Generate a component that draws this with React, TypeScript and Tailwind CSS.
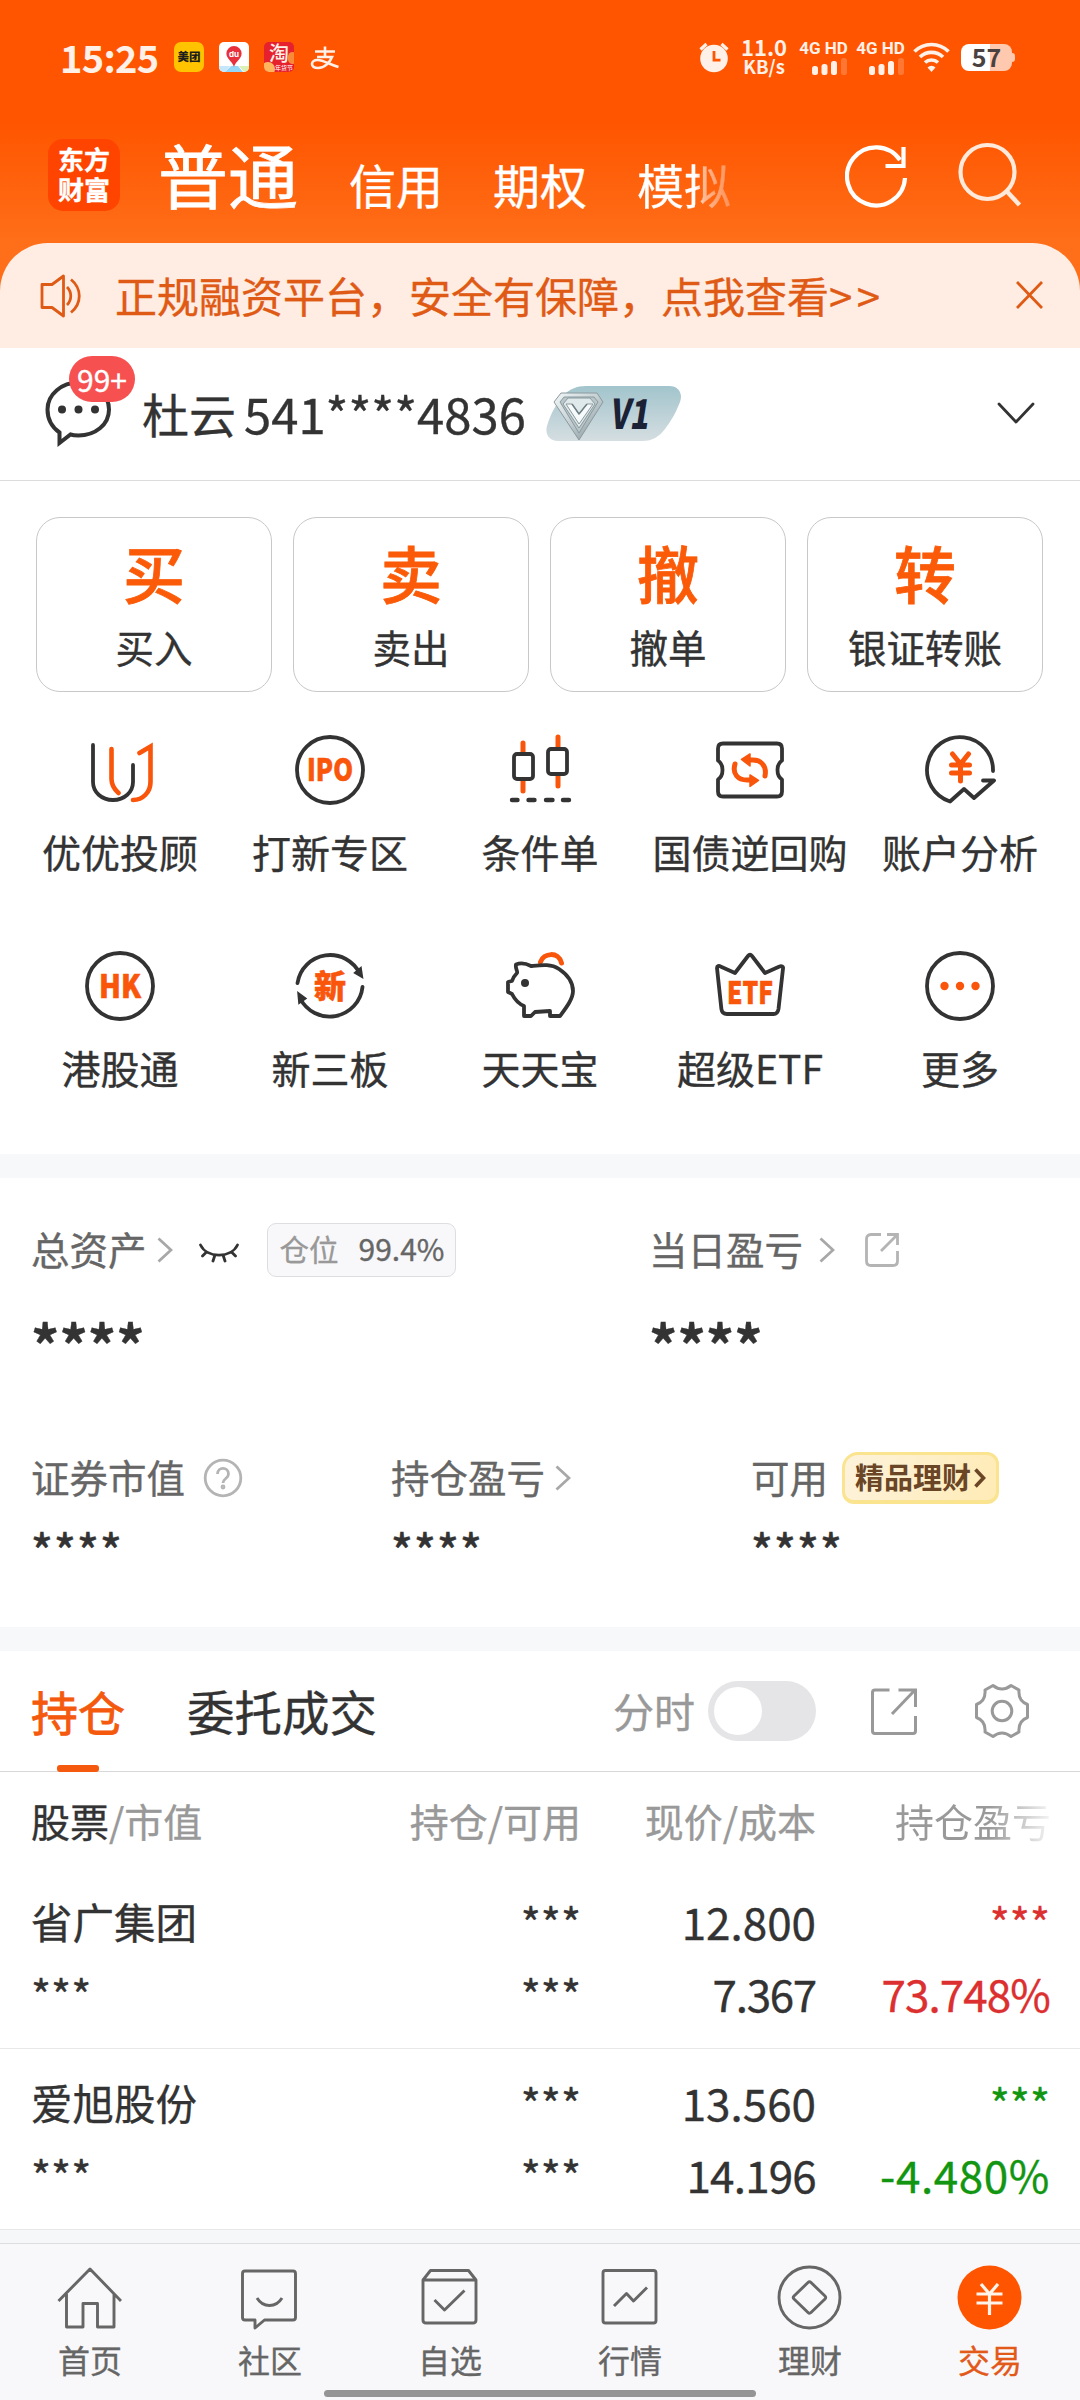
import React from "react";

const INK = "#333333";
const ORANGE = "#f9560b";

/* ---------- status bar ---------- */

function Signal() {
  return (
    <div className="flex w-[57px] shrink-0 flex-col items-center">
      <span className="h-[17px] whitespace-nowrap font-['Roboto','Noto_Sans_CJK_SC',sans-serif] text-[17px] font-bold leading-[17px]">4G HD</span>
      <svg className="ml-[13px] mt-px" width="36" height="17" viewBox="0 0 36 17" fill="#fff0e8">
        <rect x="0" y="8" width="6" height="9" rx="2.5" />
        <rect x="9.5" y="6" width="6" height="11" rx="2.5" />
        <rect x="19" y="3" width="6" height="14" rx="2.5" />
        <rect x="29" y="0" width="6" height="17" rx="2.5" opacity=".22" />
      </svg>
    </div>
  );
}

function StatusBar() {
  return (
    <div className="flex h-[114px] items-center pl-[60px] text-[#fff0e8] [-webkit-text-stroke:0px]">
      <span className="w-[114px] shrink-0 font-['Noto_Sans_CJK_SC',sans-serif] text-[38px] font-bold leading-[56px] tracking-[-0.7px]">15:25</span>
      <div className="flex h-[30px] w-[30px] shrink-0 items-center justify-center rounded-[7px] bg-[#ffc300] text-[11.5px] font-black leading-none text-[#1c1c1c]">美团</div>
      <svg className="ml-[15px] shrink-0 rounded-[5px]" width="30" height="30" viewBox="0 0 30 30">
        <rect width="30" height="30" fill="#fff" />
        <path d="M0 24h11l-5 6H0z" fill="#c6e6fb" />
        <path d="M12 24h7l5 6H6z" fill="#93d6f8" />
        <path d="M20 24h10v6h-5z" fill="#dcefb4" />
        <path d="M15 4a7.6 7.6 0 0 0-7.6 7.6C7.400 17 13 19 15 25c2-6 7.600-8 7.600-13.400A7.600 7.600 0 0 0 15 4z" fill="#e8303c" />
        <text x="15" y="14.500" fontSize="8" fontWeight="700" fill="#fff" textAnchor="middle" fontFamily="Inter">du</text>
      </svg>
      <div className="relative ml-[15px] h-[30px] w-[30px] shrink-0 overflow-hidden rounded-[5px] bg-[#e6202c]">
        <div className="absolute bottom-[-4px] left-[-3px] h-[14px] w-[14px] rounded-full bg-[#ffb45e]" />
        <div className="absolute right-[-3px] top-[10px] h-[12px] w-[9px] rounded-full bg-[#f98a3a]" />
        <span className="absolute left-[5px] top-0 text-[20px] font-medium leading-[22px] text-[#fff0e8]">淘</span>
        <span className="absolute bottom-0 left-[11px] whitespace-nowrap text-[6px] leading-[8px] text-white">年货节</span>
      </div>
      <svg className="ml-[16px] mt-[2px] shrink-0" width="30" height="24" viewBox="0 0 30 24" fill="none" stroke="#fff0e8" strokeWidth="2.600">
        <path d="M5 5.500h20M15 .5v10M7 11h15c-2 5-7 11-14 11-4 0-6-1.800-6-4s2-4 5.500-4c6 0 12 4.500 21 7" />
      </svg>

      <svg className="ml-[359px] shrink-0" width="30" height="32" viewBox="0 0 30 32">
        <circle cx="15" cy="17.500" r="13.800" fill="#fff0e8" />
        <path d="M1.500 8.500L7.500 3M28.500 8.500L22.500 3" stroke="#fff0e8" strokeWidth="3.200" />
        <path d="M15 10v9.200h6.500" stroke="#ff5500" strokeWidth="2.800" fill="none" />
      </svg>
      <div className="ml-[9px] mt-[-3px] flex w-[52px] shrink-0 flex-col items-center font-['Noto_Sans_CJK_SC',sans-serif] font-bold">
        <span className="text-[22px] leading-[20px]">11.0</span>
        <span className="text-[18.500px] leading-[20px]">KB/s</span>
      </div>
      <div className="ml-[5px]" />
      <Signal />
      <Signal />
      <svg className="ml-[4px] shrink-0" width="37" height="30" viewBox="0 0 37 30" fill="none" stroke="#fff0e8" strokeWidth="3.600">
        <path d="M1.500 9.500a24 24 0 0 1 34 0M7 15a16.500 16.500 0 0 1 23 0M12 20.500a9.500 9.500 0 0 1 13 0" />
        <path d="M14.500 25.500a5.600 5.600 0 0 1 8 0l-4 4.500z" fill="#fff0e8" stroke="none" />
      </svg>
      <div className="ml-[11px] flex h-[27px] w-[51px] shrink-0 items-center justify-center rounded-[8px] bg-[linear-gradient(90deg,#ffffff_56%,#ffc9b0_56%)] text-[25px] font-bold leading-none text-[#4a4240]">
        <span className="mt-[-2px]">57</span>
      </div>
      <div className="h-[9px] w-[3px] shrink-0 rounded-r-[3px] bg-[#ffc9b0]" />
    </div>
  );
}

function Header() {
  return (
    <div className="flex h-[129px] items-start pl-[48px] text-white">
      <div className="mt-[25px] flex h-[72px] w-[72px] shrink-0 flex-col items-center justify-center rounded-[15px] bg-[#ff4400] text-[26px] font-bold leading-[30px]">
        <span className="mt-[-2px]">东方</span>
        <span>财富</span>
      </div>
      <span className="ml-[38px] mt-[10px] shrink-0 text-[70px] leading-[100px] [-webkit-text-stroke:0.8px]">普通</span>
      <div className="ml-[51px] flex w-[400px] shrink-0 gap-[50px] whitespace-nowrap pt-[37px] text-[47px] leading-[66px]">
        <span>信用</span>
        <span>期权</span>
        <span className="bg-[linear-gradient(90deg,#ffffff_62%,#ffb790_72%,#ff9055_100%)] bg-clip-text text-transparent">模拟</span>
      </div>
      <svg className="ml-[96px] mt-[30px] shrink-0" width="64" height="64" viewBox="0 0 64 64" fill="none" stroke="#fff" strokeWidth="4.200">
        <path d="M60 34A29 29 0 1 1 55 16" />
        <path d="M58.500 3v19H40.500" />
      </svg>
      <svg className="ml-[49px] mt-[28px] shrink-0" width="64" height="66" viewBox="0 0 64 66" fill="none" stroke="#ffe9da" strokeWidth="4.200">
        <circle cx="29.500" cy="30" r="27" />
        <path d="M48.500 49L61.500 63" strokeWidth="4.500" />
      </svg>
    </div>
  );
}

function Notice() {
  return (
    <div className="flex h-[105px] items-center rounded-t-[48px] bg-[#ffede4] pl-[40px] text-[#df5a14]">
      <svg width="42" height="46" viewBox="0 0 42 46" fill="none" stroke="#df5a14" strokeWidth="2.800" strokeLinejoin="round">
        <path d="M2 11.500h10L23.500 3v40L12 34.500H2z" />
        <path d="M27 14c5 5 5 13 0 18M31 6.500c11 9 11 24 0 33" />
      </svg>
      <span className="ml-[33px] mt-[-2px] w-[901px] whitespace-nowrap text-[42px] leading-[60px]">正规融资平台，安全有保障，点我查看<span className="tracking-[4.500px]">&gt;&gt;</span></span>
      <svg className="mt-[-1px]" width="27" height="28" viewBox="0 0 27 28" fill="none" stroke="#df5a14" strokeWidth="2.800">
        <path d="M1 1l25 26M26 1L1 27" />
      </svg>
    </div>
  );
}

function Account() {
  return (
    <div className="flex h-[133px] items-center border-b border-[#dcdcdc] bg-white pl-[44px] text-[#333333]">
      <div className="relative h-[68px] w-[70px] shrink-0">
        <svg width="70" height="68" viewBox="0 0 70 68" fill="none" stroke={INK} strokeWidth="4">
          <path d="M15.500 52.500V63l11-8.500c3 1 5.500 1 8 1C51 55.500 65 45 65 29.500S51 2.500 34.500 2.500 3.500 14 3.500 29.500c0 10 5 18 12 23z" />
          <g fill={INK} stroke="none">
            <circle cx="18" cy="29.500" r="4" />
            <circle cx="34.500" cy="29.500" r="4" />
            <circle cx="51" cy="29.500" r="4" />
          </g>
        </svg>
        <div className="absolute left-[25px] top-[-24px] flex h-[46px] w-[66px] items-center justify-center rounded-full bg-[#f65050] text-[30px] leading-none text-white"><span className="mt-[-1px]">99+</span></div>
      </div>
      <span className="ml-[28px] mt-[-3px] w-[102px] shrink-0 whitespace-nowrap text-[47px] leading-[66px]">杜云</span>
      <span className="mt-[-3px] w-[301px] shrink-0 whitespace-nowrap text-[49px] leading-[66px]">541****4836</span>
      <svg className="shrink-0" width="137" height="56" viewBox="0 0 137 56">
        <defs>
          <linearGradient id="pill" x1="0" y1="0" x2="0" y2="1">
            <stop offset="0" stopColor="#a2c4cc" />
            <stop offset="1" stopColor="#d5dee1" />
          </linearGradient>
          <linearGradient id="gem" x1="0" y1="0" x2="1" y2="1">
            <stop offset="0" stopColor="#f2f7f8" />
            <stop offset=".5" stopColor="#c3ced1" />
            <stop offset="1" stopColor="#7e8d92" />
          </linearGradient>
        </defs>
        <path d="M41 0h83c10 0 14 8 11 16-5 13-10 20-15 27-6 8-13 12-22 12H13C3 55 0 47 2 40 6 26 12 17 18 10 24 3 32 0 41 0z" fill="url(#pill)" />
        <g stroke="#8b9a9f" strokeWidth="1" strokeLinejoin="round">
          <path d="M16 7h36l6 9-24 38L9 16z" fill="url(#gem)" />
          <path d="M19 11h30l4 5-19 31-19-31z" fill="#b9c6ca" />
          <path d="M23 12h22l5 6-16 24-16-24z" fill="#dfe8ea" />
          <path d="M21 18l13 20 14-20h-6l-8 10-7-10z" fill="#f6fafb" />
          <path d="M27 18l7 10 8-10" fill="none" stroke="#6f7f85" strokeWidth="1.500" />
        </g>
        <text x="64" y="42.500" fontFamily="Noto Sans CJK SC" fontWeight="900" fontSize="41" fill="#1b2236" textLength="39" lengthAdjust="spacingAndGlyphs" transform="translate(7 0) skewX(-9)">V1</text>
      </svg>
      <svg className="ml-[315px] mt-[-3px] shrink-0" width="38" height="22" viewBox="0 0 38 22" fill="none" stroke="#333" strokeWidth="2.800" strokeLinecap="round" strokeLinejoin="round">
        <path d="M2 2l17 18L36 2" />
      </svg>
    </div>
  );
}

/* ---------- quick actions ---------- */

const actions = [
  { glyph: "买", label: "买入" },
  { glyph: "卖", label: "卖出" },
  { glyph: "撤", label: "撤单" },
  { glyph: "转", label: "银证转账" },
];

function Actions() {
  return (
    <div className="grid grid-cols-4 gap-[21px] pl-[36px] pr-[37px] pt-[36px]">
      {actions.map((a) => (
        <div key={a.label} className="flex h-[175px] flex-col items-center rounded-[24px] border border-[#c8c8c8] pt-[18px]">
          <span className="h-[72px] text-[62px] font-medium leading-[72px] text-[#fb5b08] [-webkit-text-stroke:0.8px]">{a.glyph}</span>
          <span className="mt-[10px] text-[38.500px] leading-[56px] text-[#333333]">{a.label}</span>
        </div>
      ))}
    </div>
  );
}

const Ring = () => <circle cx="36" cy="36" r="33" />;
const IconText = ({ s, size, y, len }: { s: string; size: number; y: number; len: number }) => (
  <text x="36" y={y} textAnchor="middle" textLength={len} lengthAdjust="spacingAndGlyphs" fontSize={size} fontWeight="900" fontFamily="Noto Sans CJK SC" fill={ORANGE} stroke={ORANGE} strokeWidth=".6" strokeLinejoin="round">
    {s}
  </text>
);

const tools: { label: string; icon: React.ReactNode }[] = [
  {
    label: "优优投顾",
    icon: (
      <g strokeLinecap="round">
        <path d="M9 11v37c0 10 8.500 18 20 18s20-8 20-18V31" />
        <path d="M27.500 15v30c0 6 3 10.500 7 14M49 66c10 0 17.500-8 17.500-18V12.500L55.500 19" stroke={ORANGE} strokeWidth="4.600" />
      </g>
    ),
  },
  { label: "打新专区", icon: <><Ring /><IconText s="IPO" size={31} y={47} len={46} /></> },
  {
    label: "条件单",
    icon: (
      <g strokeLinecap="round">
        <path d="M19 9v10M19 47v10M54 3v10M54 41v11" stroke={ORANGE} strokeWidth="5" />
        <rect x="10" y="20" width="19" height="25" rx="3" />
        <rect x="44" y="15" width="19" height="25" rx="3" />
        <path d="M8 66h5.500M24.500 66h6M42 66h6.500M59 66h6" strokeWidth="4.400" />
      </g>
    ),
  },
  {
    label: "国债逆回购",
    icon: (
      <g strokeLinejoin="round">
        <path d="M9 9.500h54q5 0 5 5v12c-6 4-6 15 0 19v12q0 5-5 5H9q-5 0-5-5v-12c6-4 6-15 0-19v-12q0-5 5-5z" />
        <path d="M34 26h5c8 0 14 6 12 16M38 46h-5C24 46 18 40 21 30" stroke={ORANGE} strokeWidth="5" strokeLinecap="round" />
        <path d="M27.500 25.500L36 20v12zM44.500 46.500L36 41v11.500z" fill={ORANGE} stroke={ORANGE} strokeWidth="1.500" />
      </g>
    ),
  },
  {
    label: "账户分析",
    icon: (
      <g strokeLinecap="round" strokeLinejoin="round">
        <path d="M69 37A33 33 0 1 0 26 67.500L40 55l10 9 20-17.500H59" />
        <path d="M28.500 20l8 10 8-10M36.500 30v17M27.500 31h18M27.500 39h18" stroke={ORANGE} strokeWidth="5" />
      </g>
    ),
  },
  { label: "港股通", icon: <><Ring /><IconText s="HK" size={32} y={47.500} len={42} /></> },
  {
    label: "新三板",
    icon: (
      <>
        <path d="M3.500 33A33 33 0 0 1 66 24M68.500 37A33 33 0 0 1 6 48" strokeLinecap="round" />
        <path d="M67 17.500l1.500 10-8-4.500zM5 53.500l-1-11 8 6z" fill={INK} strokeWidth="1.500" transform="rotate(0 36 36)" />
        <IconText s="新" size={32} y={47.500} len={32} />
      </>
    ),
  },
  {
    label: "天天宝",
    icon: (
      <g strokeLinejoin="round">
        <path d="M36.500 12c3-9 18-11 21 1" stroke={ORANGE} strokeWidth="5" strokeLinecap="round" />
        <path d="M12 14.500c5-2 11-.5 15 1.500 10-1 20-2.500 28 3 9 6 14 14 14 22 0 8-7 17-13 25h-10v-5l-15 1-4 4H20V56C13 53 10 48 8 44l-4-2V32l4-1c1-3 3-6 5-8 1-2-2-4-1-8.500z" />
        <circle cx="21" cy="33" r="4" fill={INK} stroke="none" />
      </g>
    ),
  },
  {
    label: "超级ETF",
    icon: (
      <>
        <path d="M3 18c0-2 2-2.500 3.500-1.500L21 23l13-17q2-2.500 4 0l13 17 14.500-6.500c2-1 4 0 3.500 2L64.500 59q-.8 5-5 5H13q-5 0-5.600-5z" strokeLinejoin="round" />
        <IconText s="ETF" size={31} y={53.500} len={46} />
      </>
    ),
  },
  {
    label: "更多",
    icon: (
      <>
        <Ring />
        <g fill={ORANGE} stroke="none">
          <circle cx="20.500" cy="36" r="4.200" />
          <circle cx="36" cy="36" r="4.200" />
          <circle cx="51.500" cy="36" r="4.200" />
        </g>
      </>
    ),
  },
];

function Tools() {
  return (
    <div className="grid h-[462px] grid-cols-5 content-start px-[15px] pt-[42px]">
      {tools.map((t) => (
        <div key={t.label} className="flex h-[216px] flex-col items-center">
          <svg width="72" height="72" viewBox="0 0 72 72" fill="none" stroke={INK} strokeWidth="3.800">{t.icon}</svg>
          <span className="mt-[17px] whitespace-nowrap text-[39px] leading-[56px] text-[#333333]">{t.label}</span>
        </div>
      ))}
    </div>
  );
}

/* ---------- assets ---------- */

const Chevron = ({ className }: { className?: string }) => (
  <svg className={className} width="16" height="26" viewBox="0 0 16 26" fill="none" stroke="#a8a8a8" strokeWidth="2.800">
    <path d="M1.500 1.500L14 13 1.500 24.500" />
  </svg>
);

function Assets() {
  return (
    <div className="h-[449px] bg-white px-[31px] pt-[42px] text-[#666666]">
      <div className="flex h-[60px] items-center text-[38.500px] leading-[56px]">
        <div className="flex w-[618px] items-center">
          <span className="mt-[-5px]">总资产</span>
          <Chevron className="ml-[10px]" />
          <svg className="ml-[26px] mt-[6px]" width="40" height="20" viewBox="0 0 40 20" fill="none" stroke="#333" strokeWidth="2.800" strokeLinecap="round">
            <path d="M1.500 2C8 15.500 32 15.500 38.500 2M3.500 13l4-4M14 18l1.800-5.500M26 18l-1.800-5.500M36.500 13l-4-4" />
          </svg>
          <div className="ml-[28px] flex h-[54px] w-[189px] items-center whitespace-nowrap rounded-[9px] border border-[#dedee2] bg-[#f8f8fa] pl-[12px] text-[29.500px] leading-[44px] text-[#999999]">
            <span className="mt-[-4px] w-[79px]">仓位</span>
            <span className="mt-[-4px] text-[30px] text-[#666666]">99.4%</span>
          </div>
        </div>
        <span className="mt-[-5px]">当日盈亏</span>
        <Chevron className="ml-[16px]" />
        <svg className="ml-[30px]" width="34" height="34" viewBox="0 0 34 34" fill="none" stroke="#b4b4b4" strokeWidth="2.800">
          <path d="M16 1.500H6q-4.500 0-4.500 4.500v22q0 4.500 4.500 4.500h22q4.500 0 4.500-4.500V18M16 18L32 2M22 1.500h10.500V12" />
        </svg>
      </div>
      <div className="flex h-[92px] pt-[27px] font-bold text-[#333333]">
        <span className="w-[618px] text-[56px] leading-[72px]">****</span>
        <span className="text-[56px] leading-[72px]">****</span>
      </div>
      <div className="mt-[76px] flex h-[60px] items-center text-[38.500px] leading-[56px]">
        <div className="flex w-[360px] items-center">
          <span className="mt-[-5px]">证券市值</span>
          <svg className="ml-[18px]" width="40" height="40" viewBox="0 0 40 40" fill="none" stroke="#b4b4b4" strokeWidth="2.800">
            <circle cx="20" cy="20" r="17.800" />
            <path d="M14.500 16c0-7.500 11-7.500 11 0 0 4.500-5.500 4.500-5.500 9" />
            <circle cx="20" cy="29" r="1" />
          </svg>
        </div>
        <div className="flex w-[360px] items-center">
          <span className="mt-[-5px]">持仓盈亏</span>
          <Chevron className="ml-[10px]" />
        </div>
        <span className="mt-[-5px]">可用</span>
        <div className="ml-[14px] flex h-[52px] w-[157px] shrink-0 items-center whitespace-nowrap rounded-[12px] rounded-tl-[16px] border-[3px] border-b-4 border-[#fbe48f] bg-[linear-gradient(110deg,#fdf3dc,#ffebb5)] pl-[10px] text-[29px] font-bold text-[#6a4526] [-webkit-text-stroke:0px]">
          <span className="mt-[-4px]">精品理财</span>
          <svg className="ml-[3px]" width="12" height="20" viewBox="0 0 12 20" fill="none" stroke="#6a4526" strokeWidth="3.600">
            <path d="M1.500 1.500L9.500 10l-8 8.500" />
          </svg>
        </div>
      </div>
      <div className="flex pt-[11px] text-[45px] font-medium leading-[60px] text-[#333333]">
        <span className="w-[360px] tracking-[1.200px]">****</span>
        <span className="w-[360px] tracking-[1.200px]">****</span>
        <span className="tracking-[1.200px]">****</span>
      </div>
    </div>
  );
}

/* ---------- holdings ---------- */

function Tabs() {
  return (
    <div className="flex h-[121px] items-center border-b border-[#d8d8d8] bg-white pl-[31px]">
      <div className="relative flex h-full items-center text-[47px] text-[#f4590d] [-webkit-text-stroke:0.8px]">
        <span>持仓</span>
        <div className="absolute bottom-[-1px] left-[26px] h-[7px] w-[42px] rounded-[3px] bg-[#f4590d]" />
      </div>
      <span className="ml-[62px] w-[426px] text-[47.500px] text-[#333333]">委托成交</span>
      <span className="w-[95px] whitespace-nowrap text-[41px] text-[#999999]">分时</span>
      <div className="flex h-[60px] w-[108px] items-center rounded-full bg-[#e5e5e7] pl-[6px]">
        <div className="h-[48px] w-[48px] rounded-full bg-white" />
      </div>
      <svg className="ml-[55px]" width="46" height="47" viewBox="0 0 46 47" fill="none" stroke="#999" strokeWidth="3">
        <path d="M18.500 2H4q-2.500 0-2.500 2.500V43q0 2.500 2.500 2.500h38q2.500 0 2.500-2.500V28M21 26L44 2M27.500 2h17v17" />
      </svg>
      <svg className="ml-[57px]" width="56" height="56" viewBox="0 0 56 56" fill="none" stroke="#999" strokeWidth="3" strokeLinejoin="round">
        <circle cx="28" cy="28" r="9.800" />
        <path d="M19 2.500q9 7 18 0l8 4.500q-1 11 8.500 14.500v13Q44 38 45 49l-8 4.500q-9-7-18 0L11 49q1-11-8.500-14.500v-13Q12 18 11 7z" />
      </svg>
    </div>
  );
}

function TableHead() {
  return (
    <div className="flex h-[96px] items-center whitespace-nowrap bg-white pl-[31px] text-[39px] leading-[56px] text-[#999999]">
      <span className="w-[309px]"><span className="text-[#333333]">股票</span>/市值</span>
      <span className="w-[241px] text-right">持仓/可用</span>
      <span className="w-[235px] text-right">现价/成本</span>
      <span className="ml-[79px] bg-[linear-gradient(90deg,#999999_60%,#f0f0f0_98%)] bg-clip-text text-transparent [-webkit-text-stroke:0px]">持仓盈亏</span>
    </div>
  );
}

const rows = [
  { name: "省广集团", price: "12.800", cost: "7.367", costFit: "tracking-[-1.3px]", pct: "73.748%", pctFit: "tracking-[-0.9px]", tone: "text-[#dc2f2f]" },
  { name: "爱旭股份", price: "13.560", cost: "14.196", costFit: "tracking-[-0.8px]", pct: "-4.480%", pctFit: "tracking-[0.6px]", tone: "text-[#129612]" },
];

function Row({ name, price, cost, costFit, pct, pctFit, tone }: (typeof rows)[number]) {
  return (
    <div className="flex h-[181px] flex-col border-b border-[#e8e8e8] bg-white pl-[31px] pt-[17px] text-[44px] leading-[72px] text-[#333333]">
      <div className="flex">
        <span className="w-[250px] text-[41.500px]">{name}</span>
        <span className="w-[300px] text-right text-[43px]">***</span>
        <span className="w-[235px] text-right">{price}</span>
        <span className={`w-[234px] text-right text-[43px] ${tone}`}>***</span>
      </div>
      <div className="flex">
        <span className="w-[250px] text-[43px]">***</span>
        <span className="w-[300px] text-right text-[43px]">***</span>
        <span className={`w-[235px] text-right ${costFit}`}>{cost}</span>
        <span className={`w-[234px] text-right ${pctFit} ${tone}`}>{pct}</span>
      </div>
    </div>
  );
}

/* ---------- bottom navigation ---------- */

const nav: { label: string; active?: boolean; icon: React.ReactNode }[] = [
  { label: "首页", icon: <path d="M1.500 36L33 4l31 32M9.500 29v33h16.500V38.500h14.500V62H57V29" /> },
  { label: "社区", icon: <path d="M8 6h48q2.500 0 2.500 2.500v44Q58.500 55 56 55H27.500L18 63v-8H8q-2.500 0-2.500-2.500v-44Q5.500 6 8 6zM20 33c6 10 19 10 25 0" /> },
  { label: "自选", icon: <path d="M6 15h53v40q0 3-3 3H9q-3 0-3-3zM6 15l7.500-9.500h38L59 15M17.500 35l10 10L47.500 25.500" /> },
  { label: "行情", icon: <path d="M8.500 5.500h48q2.500 0 2.500 2.500v47.500q0 2.500-2.500 2.500h-48Q6 58 6 55.500V8q0-2.500 2.500-2.500zM17 41l12.500-12.500 7 7.500L50 22.500" /> },
  { label: "理财", icon: <><circle cx="32.500" cy="32.500" r="30.500" /><path d="M31 17.500q1.500-1.500 3 0L48 31q1.500 1.500 0 3L34 47.500q-1.500 1.500-3 0L17 34q-1.500-1.500 0-3z" /></> },
  { label: "交易", active: true, icon: <><circle cx="32.500" cy="32.500" r="32" fill="#ff5500" stroke="none" /><path d="M24 19l8.500 10L41 19M32.500 29v21M19.500 29h26M19.500 38h26" stroke="#fff3ea" strokeWidth="3.200" /></> },
];

function BottomNav() {
  return (
    <div className="relative h-[157px] border-t border-[#dedede] bg-[#f8f8fa]">
      <div className="grid grid-cols-6 pt-[21px]">
        {nav.map((n) => (
          <div key={n.label} className="flex flex-col items-center">
            <svg className="mr-[1px]" width="65" height="66" viewBox="0 0 65 66" fill="none" stroke="#666" strokeWidth="2.900" strokeLinejoin="round">{n.icon}</svg>
            <span className={n.active ? "mt-[5px] text-[32px] leading-[46px] text-[#e2591a]" : "mt-[5px] text-[32px] leading-[46px] text-[#666666]"}>{n.label}</span>
          </div>
        ))}
      </div>
      <div className="absolute bottom-[3px] left-[324px] h-[7px] w-[432px] rounded-full bg-[#959595]" />
    </div>
  );
}

export default function App() {
  return (
    <div className="h-[2400px] w-[1080px] overflow-hidden bg-white font-['Noto_Sans_CJK_SC',sans-serif] [-webkit-text-stroke:0.35px]">
      <div className="h-[348px] bg-[linear-gradient(180deg,#ff5500_0px,#ff5500_122px,#ff6e18_240px)]">
        <StatusBar />
        <Header />
        <Notice />
      </div>
      <Account />
      <Actions />
      <Tools />
      <div className="h-[24px] bg-[#f7f8fa]" />
      <Assets />
      <div className="h-[24px] bg-[#f7f8fa]" />
      <Tabs />
      <TableHead />
      {rows.map((r) => (
        <Row key={r.name} {...r} />
      ))}
      <div className="h-[13px] bg-[#f6f7f9]" />
      <BottomNav />
    </div>
  );
}
